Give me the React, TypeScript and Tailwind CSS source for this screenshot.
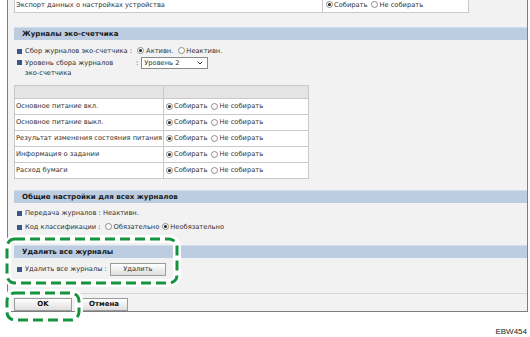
import { ChevronDown } from 'lucide-react'

const font = { fontFamily: '"DejaVu Sans", Verdana, sans-serif' }

function Radio({ checked }: { checked?: boolean }) {
    return (
        <span className="inline-flex w-[7px] h-[7px] rounded-full border border-[#8c8c8c] bg-white items-center justify-center shrink-0">
            {checked && <span className="w-[3px] h-[3px] rounded-full bg-[#222]" />}
        </span>
    )
}

function Choice({ a = 'Собирать', b = 'Не собирать', first = true }: { a?: string; b?: string; first?: boolean }) {
    return (
        <span className="inline-flex items-center">
            <Radio checked={first} />
            <span className="ml-[1px]">{a}</span>
            <span className="ml-[4px] inline-flex"><Radio checked={!first} /></span>
            <span className="ml-[1px]">{b}</span>
        </span>
    )
}

function Bullet() {
    return <span className="inline-block w-[5px] h-[5px] bg-[#3a5689] shrink-0 mx-[3px]" />
}

function Header({ children }: { children: React.ReactNode }) {
    return (
        <div className="h-[13px] bg-[#bccde2] border-t border-[#d3deed] flex items-center pl-[8px] font-bold text-[7.1px] text-[#1a1a1a]">
            {children}
        </div>
    )
}

function Btn({ children, w }: { children: React.ReactNode; w: string }) {
    return (
        <button
            className={`${w} h-[13px] border border-[#9c9c9c] bg-gradient-to-b from-white to-[#dedede] flex items-center justify-center leading-none`}
        >
            {children}
        </button>
    )
}

const rows = [
    'Основное питание вкл.',
    'Основное питание выкл.',
    'Результат изменения состояния питания',
    'Информация о задании',
    'Расход бумаги',
]

export default function App() {
    return (
        <div className="relative w-[530px] h-[337px] bg-white overflow-hidden text-[6.7px] text-[#333]" style={font}>
            <div className="ml-[7px] w-[521px] h-[312px] border-x border-b border-[#7d7d7d] bg-[#f2f2f2] pl-[6px] flex flex-col">
                {/* top row, cut off */}
                <div className="-mt-[3px] w-[455px] h-[16px] border border-[#c9c9c9] bg-white flex">
                    <div className="w-[308px] border-r border-[#c9c9c9] flex items-end pb-[2px] pl-[1px]">
                        Экспорт данных о настройках устройства
                    </div>
                    <div className="flex items-end pb-[2px] pl-[3px]">
                        <Choice />
                    </div>
                </div>

                {/* eco counter logs */}
                <div className="mt-[14px]">
                    <Header>Журналы эко-счетчика</Header>
                </div>
                <div className="mt-[4px] h-[14px] flex items-center">
                    <Bullet />
                    <span>Сбор журналов эко-счетчика :</span>
                    <span className="ml-[5px] inline-flex items-center">
                        <Radio checked />
                        <span className="ml-[2px]">Активн.</span>
                        <span className="ml-[5px] inline-flex"><Radio /></span>
                        <span className="ml-[1px]">Неактивн.</span>
                    </span>
                </div>
                <div className="h-[19px] flex items-start">
                    <span className="mt-[2px] flex"><Bullet /></span>
                    <span className="w-[111px] leading-[10px]">
                        Уровень сбора журналов
                        <br />
                        эко-счетчика
                    </span>
                    <span className="leading-[10px]">:</span>
                    <span className="ml-[3px] mt-[-1px] w-[67px] h-[12px] border border-[#8a8a8a] bg-white flex items-center justify-between pl-[2px] pr-[3px]">
                        <span>Уровень 2</span>
                        <ChevronDown size={8} strokeWidth={3} className="text-[#333]" />
                    </span>
                </div>

                <table className="mt-[8px] w-[295px] border-collapse bg-white table-fixed">
                    <tbody>
                        <tr className="h-[13px] bg-[#e4e4e4]">
                            <td className="w-[149px] border border-[#c9c9c9] p-0" />
                            <td className="border border-[#c9c9c9] p-0" />
                        </tr>
                        {rows.map(r => (
                            <tr key={r} className="h-[16px]">
                                <td className="border border-[#c9c9c9] p-0 pl-[1px] whitespace-nowrap overflow-hidden">{r}</td>
                                <td className="border border-[#c9c9c9] p-0 pl-[2px]">
                                    <div className="flex items-center">
                                        <Choice />
                                    </div>
                                </td>
                            </tr>
                        ))}
                    </tbody>
                </table>

                {/* common settings */}
                <div className="mt-[11px]">
                    <Header>Общие настройки для всех журналов</Header>
                </div>
                <div className="mt-[3px] h-[14px] flex items-center">
                    <Bullet />
                    <span>Передача журналов : Неактивн.</span>
                </div>
                <div className="h-[14px] flex items-center">
                    <Bullet />
                    <span>Код классификации :</span>
                    <span className="ml-[4px] inline-flex items-center">
                        <Radio />
                        <span className="ml-[2px]">Обязательно</span>
                        <span className="ml-[3px] inline-flex"><Radio checked /></span>
                        <span className="ml-[1px]">Необязательно</span>
                    </span>
                </div>

                {/* delete all */}
                <div className="mt-[11px]">
                    <Header>Удалить все журналы</Header>
                </div>
                <div className="mt-[4px] h-[14px] flex items-center">
                    <Bullet />
                    <span>Удалить все журналы :</span>
                    <span className="ml-[3px]">
                        <Btn w="w-[56px]">Удалить</Btn>
                    </span>
                </div>

                <div className="mt-[17px] border-t border-[#d6d6d6] pt-[4px] flex gap-[8px] font-bold text-[7px] text-[#111]">
                    <Btn w="w-[58px]">OK</Btn>
                    <Btn w="w-[48px]">Отмена</Btn>
                </div>
            </div>

            <div
                className="absolute right-[3px] top-[326px] text-[8px] text-[#222]"
                style={{ fontFamily: '"Liberation Sans", Arial, sans-serif' }}
            >
                EBW454
            </div>

            {/* callout marks */}
            <svg className="absolute left-0 top-0 pointer-events-none" width="530" height="337">
                <g fill="none">
                    <rect x="7" y="239" width="170" height="44" rx="8" stroke="white" strokeWidth="8" />
                    <rect x="7" y="293" width="72" height="27" rx="8" stroke="white" strokeWidth="8" />
                    <rect x="7" y="239" width="170" height="44" rx="8" stroke="#15943f" strokeWidth="3" strokeDasharray="10 5" />
                    <rect x="7" y="293" width="72" height="27" rx="8" stroke="#15943f" strokeWidth="3" strokeDasharray="10 5" />
                </g>
            </svg>
        </div>
    )
}
